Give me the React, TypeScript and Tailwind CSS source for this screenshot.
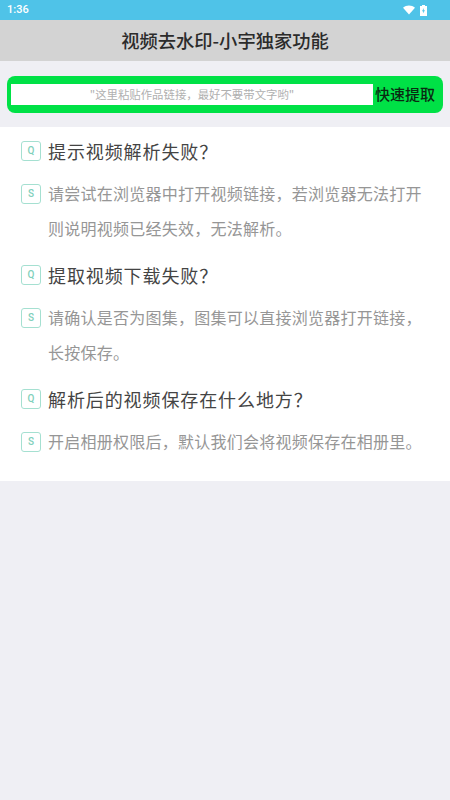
const font = { fontFamily: '"Noto Sans CJK SC", Roboto, sans-serif' };

function Badge({ letter }: { letter: string }) {
  return (
    <span
      className="flex h-[20px] w-[20px] shrink-0 items-center justify-center rounded-[3px] border border-[#a5e0d1] text-[10px] font-medium leading-none text-[#7fd0bb]"
      style={{ fontFamily: 'Roboto, sans-serif' }}
    >
      {letter}
    </span>
  );
}

function Question({ text }: { text: string }) {
  return (
    <div className="flex h-[24px] items-center gap-[7px]">
      <Badge letter="Q" />
      <span className="text-[18px] leading-[24px] tracking-[0.9px] text-[#444444]">{text}</span>
    </div>
  );
}

function Answer({ lines }: { lines: string[] }) {
  return (
    <div className="flex gap-[7px]">
      <div className="flex h-[35px] items-center">
        <Badge letter="S" />
      </div>
      <div className="text-[16px] leading-[35px] tracking-[0.25px] text-[#969696]">
        {lines.map((l) => (
          <div key={l} className="whitespace-nowrap">{l}</div>
        ))}
      </div>
    </div>
  );
}

export default function App() {
  return (
    <div className="flex h-[800px] w-[450px] flex-col overflow-hidden bg-[#efeff4]" style={font}>
      {/* status bar */}
      <div className="flex h-[20px] items-center justify-between bg-[#4fc3e8] pl-[7px] pr-[23px]">
        <span className="text-[11px] font-medium text-white" style={{ fontFamily: 'Roboto, sans-serif' }}>1:36</span>
        <div className="flex items-center gap-[5px]">
          <svg width="12" height="10" viewBox="0 0 12 10">
            <path d="M0 2.8 C3.4 -0.4 8.6 -0.4 12 2.8 L6 9.6 Z" fill="white" />
          </svg>
          <svg width="7" height="11" viewBox="0 0 7 11">
            <path d="M2 0h3v1h2v10H0V1h2z" fill="white" />
            <path d="M3.8 3 2 6.2h1.2L2.9 8.6 5 5.2H3.7z" fill="#4fc3e8" />
          </svg>
        </div>
      </div>

      {/* title */}
      <div className="flex h-[41px] items-center justify-center bg-[#d3d3d3] text-[18.3px] font-medium text-[#2b2b2b]">
        视频去水印-小宇独家功能
      </div>

      {/* search */}
      <div className="mx-[7px] mt-[15px] flex h-[37px] items-center rounded-[8px] bg-[#00e146] pl-[4px]">
        <div className="flex h-[21px] w-[362px] items-center justify-center bg-white text-[11.4px] text-[#b0b0b0]">
          "这里粘贴作品链接，最好不要带文字哟"
        </div>
        <span className="ml-[2px] whitespace-nowrap text-[15px] font-medium text-[#0a2a12]">快速提取</span>
      </div>

      {/* faq */}
      <div className="mt-[14px] flex h-[354px] flex-col bg-white pl-[21px] pt-[12px]">
        <Question text="提示视频解析失败？" />
        <div className="mt-[13px]">
          <Answer lines={['请尝试在浏览器中打开视频链接，若浏览器无法打开', '则说明视频已经失效，无法解析。']} />
        </div>
        <div className="mt-[17px]">
          <Question text="提取视频下载失败？" />
        </div>
        <div className="mt-[13px]">
          <Answer lines={['请确认是否为图集，图集可以直接浏览器打开链接，', '长按保存。']} />
        </div>
        <div className="mt-[17px]">
          <Question text="解析后的视频保存在什么地方？" />
        </div>
        <div className="mt-[13px]">
          <Answer lines={['开启相册权限后，默认我们会将视频保存在相册里。']} />
        </div>
      </div>
    </div>
  );
}
